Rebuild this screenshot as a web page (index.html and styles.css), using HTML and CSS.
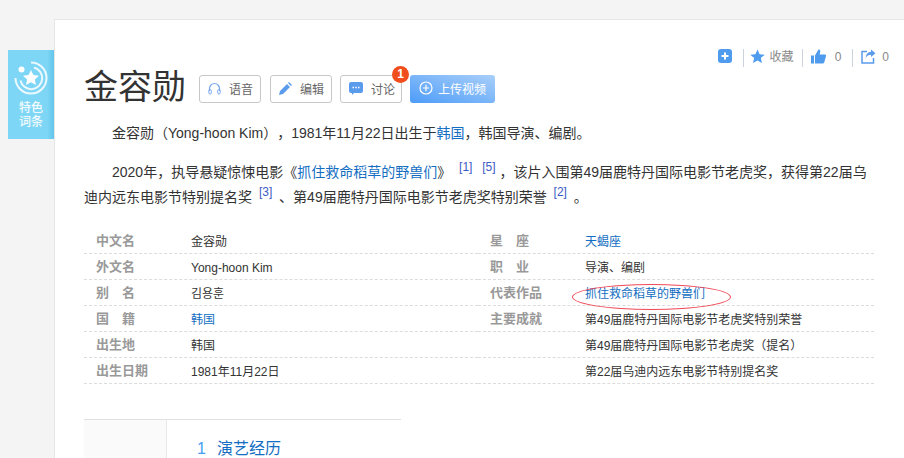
FILE: index.html
```html
<!DOCTYPE html>
<html lang="zh">
<head>
  <meta charset="UTF-8">
  <title>金容勋</title>
  <link rel="stylesheet" href="styles.css">
</head>
<body>

<div class="wrap">
  <a class="tese">
    <svg width="34" height="34" viewBox="0 0 34 34" fill="none">
      <path d="M17 1.500a15.500 15.500 0 1 1-15.500 15.500" stroke="#fff" stroke-width="2" opacity=".85"/>
      <path d="M20 6.500a11 11 0 1 1-13.500 13" stroke="#fff" stroke-width="2" opacity=".85"/>
      <circle cx="7.500" cy="8.500" r="3" fill="#fff"/>
      <path d="M17 9l2.400 5.100 5.600.7-4.100 3.800 1.100 5.500-5-2.800-5 2.800 1.100-5.500L9 14.800l5.600-.7z" fill="#fff"/>
    </svg>
    <span>特色<br>词条</span>
  </a>

  <div class="main">
    <div class="side-tools">
      <svg width="14" height="14" viewBox="0 0 14 14"><rect width="14" height="14" rx="3" fill="#4f9cee"/><path d="M7 3.500v7M3.500 7h7" stroke="#fff" stroke-width="2"/></svg>
      <i class="sep sep-a"></i>
      <svg width="15" height="15" viewBox="0 0 15 15"><path d="M7.500.5l2.100 4.700 5.100.5-3.900 3.400 1.200 5-4.500-2.700L3 14.100l1.200-5L.3 5.700l5.100-.5z" fill="#4f9cee"/></svg>
      <span class="fav">收藏</span>
      <i class="sep sep-b"></i>
      <svg width="15" height="15" viewBox="0 0 15 15"><path d="M0 6.500h3v8H0zM4 14.500V6.500L7.500.5c1.500 0 2 1 1.700 2.300L8.700 5.500H14c1 0 1.300 1 1 1.800l-1.800 6.200c-.2.700-.7 1-1.400 1z" fill="#4f9cee"/></svg>
      <span class="num like">0</span>
      <i class="sep"></i>
      <svg width="15" height="15" viewBox="0 0 15 15" fill="none"><path d="M6 2.500H1v11.500h11.500V9" stroke="#5b9bec" stroke-width="1.500"/><path d="M10 .5l4.500 3.700L10 8V5.800C7.500 5.800 5.800 7 4.800 9c0-3.500 2-6 5.200-6.300z" fill="#5b9bec"/></svg>
      <span class="num">0</span>
    </div>

    <div class="title-row">
      <h1>金容勋</h1>
      <a class="btn btn-voice">
        <svg width="13" height="13" viewBox="0 0 13 13" fill="none"><path d="M1.500 9V6.500a5 5 0 0 1 10 0V9" stroke="#7ba7f0" stroke-width="1.200"/><rect x=".8" y="7.500" width="2.500" height="4.500" rx="1.200" stroke="#7ba7f0"/><rect x="9.700" y="7.500" width="2.500" height="4.500" rx="1.200" stroke="#7ba7f0"/></svg>
        语音
      </a>
      <a class="btn">
        <svg width="13" height="13" viewBox="0 0 13 13"><path d="M0 13l1-4 7-7 3 3-7 7zM9 1l1-1 3 3-1 1z" fill="#5b9bec"/></svg>
        编辑
      </a>
      <a class="btn btn-talk">
        <svg width="14" height="13" viewBox="0 0 14 13"><path d="M2 0h10a2 2 0 0 1 2 2v7a2 2 0 0 1-2 2H5l-2 2v-2H2a2 2 0 0 1-2-2V2a2 2 0 0 1 2-2z" fill="#5b9bec"/><path d="M3.500 5.500h1.500M6.300 5.500h1.500M9 5.500h1.500" stroke="#fff" stroke-width="1.500"/></svg>
        讨论
        <b class="badge">1</b>
      </a>
      <a class="btn-up">
        <svg width="14" height="14" viewBox="0 0 14 14" fill="none"><circle cx="7" cy="7" r="6" stroke="#fff" stroke-width="1.200"/><path d="M7 3.800v6.400M3.800 7h6.400" stroke="#fff" stroke-width="1.200"/></svg>
        上传视频
      </a>
    </div>

    <p class="para">金容勋（Yong-hoon Kim），1981年11月22日出生于<a>韩国</a>，韩国导演、编剧。</p>
    <p class="para">2020年，执导悬疑惊悚电影《<a>抓住救命稻草的野兽们</a>》 <sup class="fn-a">[1]</sup> <sup class="fn-b">[5]</sup> ，该片入围第49届鹿特丹国际电影节老虎奖，获得第22届乌迪内远东电影节特别提名奖 <sup>[3]</sup> 、第49届鹿特丹国际电影节老虎奖特别荣誉 <sup>[2]</sup> 。</p>

    <div class="info">
      <dl class="col-l">
        <div class="row"><dt>中文名</dt><dd>金容勋</dd></div>
        <div class="row"><dt>外文名</dt><dd>Yong-hoon Kim</dd></div>
        <div class="row"><dt>别&emsp;名</dt><dd class="ko">김용훈</dd></div>
        <div class="row"><dt>国&emsp;籍</dt><dd><a>韩国</a></dd></div>
        <div class="row"><dt>出生地</dt><dd>韩国</dd></div>
        <div class="row"><dt>出生日期</dt><dd>1981年11月22日</dd></div>
      </dl>
      <dl class="col-r">
        <div class="row"><dt>星&emsp;座</dt><dd><a>天蝎座</a></dd></div>
        <div class="row"><dt>职&emsp;业</dt><dd>导演、编剧</dd></div>
        <div class="row"><dt>代表作品</dt><dd class="circled"><a>抓住救命稻草的野兽们</a><i class="ring"></i></dd></div>
        <div class="row"><dt>主要成就</dt><dd>第49届鹿特丹国际电影节老虎奖特别荣誉</dd></div>
        <div class="row"><dt></dt><dd>第49届鹿特丹国际电影节老虎奖（提名）</dd></div>
        <div class="row"><dt></dt><dd>第22届乌迪内远东电影节特别提名奖</dd></div>
      </dl>
    </div>

    <div class="catalog">
      <div class="cat-side"></div>
      <div class="cat-list"><span class="cat-num">1</span><a>演艺经历</a></div>
    </div>
  </div>
</div>

</body>
</html>
```

FILE: styles.css
```css
html, body {
  margin: 0;
  height: 458px;
  overflow: hidden;
}
body {
  background: #f4f4f4;
  color: #333;
  font-family: "Liberation Sans", "Noto Sans CJK SC", sans-serif;
  font-size: 14px;
  text-spacing-trim: space-all;
}
a {
  color: #136ec2;
  text-decoration: none;
}
.wrap {
  display: flex;
  align-items: flex-start;
  padding: 19px 0 0 8px;
}
.tese {
  flex: none;
  width: 46px;
  height: 89px;
  margin-top: 31px;
  background: linear-gradient(to right, #7dd6f5 85%, #62c5ea);
  color: #fff;
  text-align: center;
  font-size: 12px;
  line-height: 14px;
  text-shadow: 0 0 2px #a8e4f8;
}
.tese svg {
  display: block;
  margin: 11px auto 0;
}
.tese span {
  display: block;
  margin-top: 6px;
}
.main {
  flex: none;
  position: relative;
  box-sizing: border-box;
  width: 851px;
  height: 439px;
  padding: 0 31px 0 29px;
  background: #fff;
  border: 1px solid #e6e6e6;
  border-width: 1px 0 0 1px;
  overflow: hidden;
}
.side-tools {
  position: absolute;
  top: 29px;
  right: 16px;
  display: flex;
  align-items: flex-start;
  height: 18px;
  color: #888;
  font-size: 12px;
  line-height: 16px;
}
.sep {
  width: 1px;
  height: 18px;
  background: #ccd3dc;
  margin: 0 8px 0 11px;
}
.sep-a {
  margin-right: 6px;
}
.sep-b {
  margin-left: 8px;
}
.fav {
  margin-left: 5px;
}
.num {
  margin-left: 6px;
}
.num.like {
  margin-left: 9px;
}
.title-row {
  display: flex;
  align-items: center;
  padding-top: 44px;
  height: 46px;
}
h1 {
  margin: 0 13px 0 0;
  font-size: 34px;
  font-weight: 400;
  line-height: 46px;
  color: #333;
}
.btn, .btn-up {
  position: relative;
  display: flex;
  align-items: center;
  gap: 8px;
  box-sizing: border-box;
  height: 28px;
  margin: 4px 8px 0 0;
  padding: 0 7px 2px 8px;
  border: 1px solid #c8c8c8;
  border-radius: 3px;
  background: #fff;
  color: #666;
  font-size: 12px;
}
.btn-voice {
  margin-right: 9px;
}
.btn-talk {
  padding-right: 6px;
}
.btn-up {
  border: 0;
  margin-right: 0;
  color: #fff;
  background: linear-gradient(to top right, #4d9cf8, #a9cffa);
  gap: 5px;
  padding: 0 9px 2px;
}
.badge {
  position: absolute;
  top: -10px;
  right: -8px;
  width: 17px;
  height: 17px;
  border-radius: 50%;
  background: #f04e1c;
  color: #fff;
  font-size: 12px;
  line-height: 17px;
  text-align: center;
}
.para {
  margin: 0 0 14px;
  font-size: 14px;
  line-height: 25px;
  text-indent: 28px;
}
.title-row + .para {
  margin-top: 11px;
}
sup {
  font-size: 12px;
  line-height: 0;
  color: #3b5bc5;
  margin: 0 3px;
}
sup.fn-a {
  margin-left: 4px;
}
sup.fn-b {
  margin-right: 0;
}
.info {
  display: flex;
  margin-top: 18px;
}
dl {
  margin: 0;
}
.col-l {
  flex: none;
  width: 394px;
}
.col-r {
  flex: 1;
}
.row {
  display: flex;
  height: 26px;
  line-height: 26px;
  box-sizing: border-box;
  border-bottom: 1px dashed #dcdcdc;
  font-size: 12px;
}
dt {
  flex: none;
  width: 107px;
  padding-left: 12px;
  box-sizing: border-box;
  color: #999;
  font-weight: 700;
  font-size: 13px;
}
dd {
  margin: 0;
  padding-top: 1px;
  color: #333;
}
.circled {
  position: relative;
}
.ring {
  position: absolute;
  left: -13px;
  top: 4px;
  width: 159px;
  height: 26px;
  border: 1px solid #ef4a57;
  border-radius: 50%;
  box-sizing: border-box;
}
.catalog {
  display: flex;
  width: 317px;
  height: 60px;
  margin-top: 35px;
  border-top: 1px solid #e0e0e0;
}
.cat-side {
  width: 82px;
  background: #fafafa;
  border-right: 1px solid #e8e8e8;
}
.cat-list {
  padding: 19px 0 0 30px;
  font-size: 16px;
  line-height: 20px;
}
.cat-num {
  color: #459df5;
  margin-right: 11px;
}
```
